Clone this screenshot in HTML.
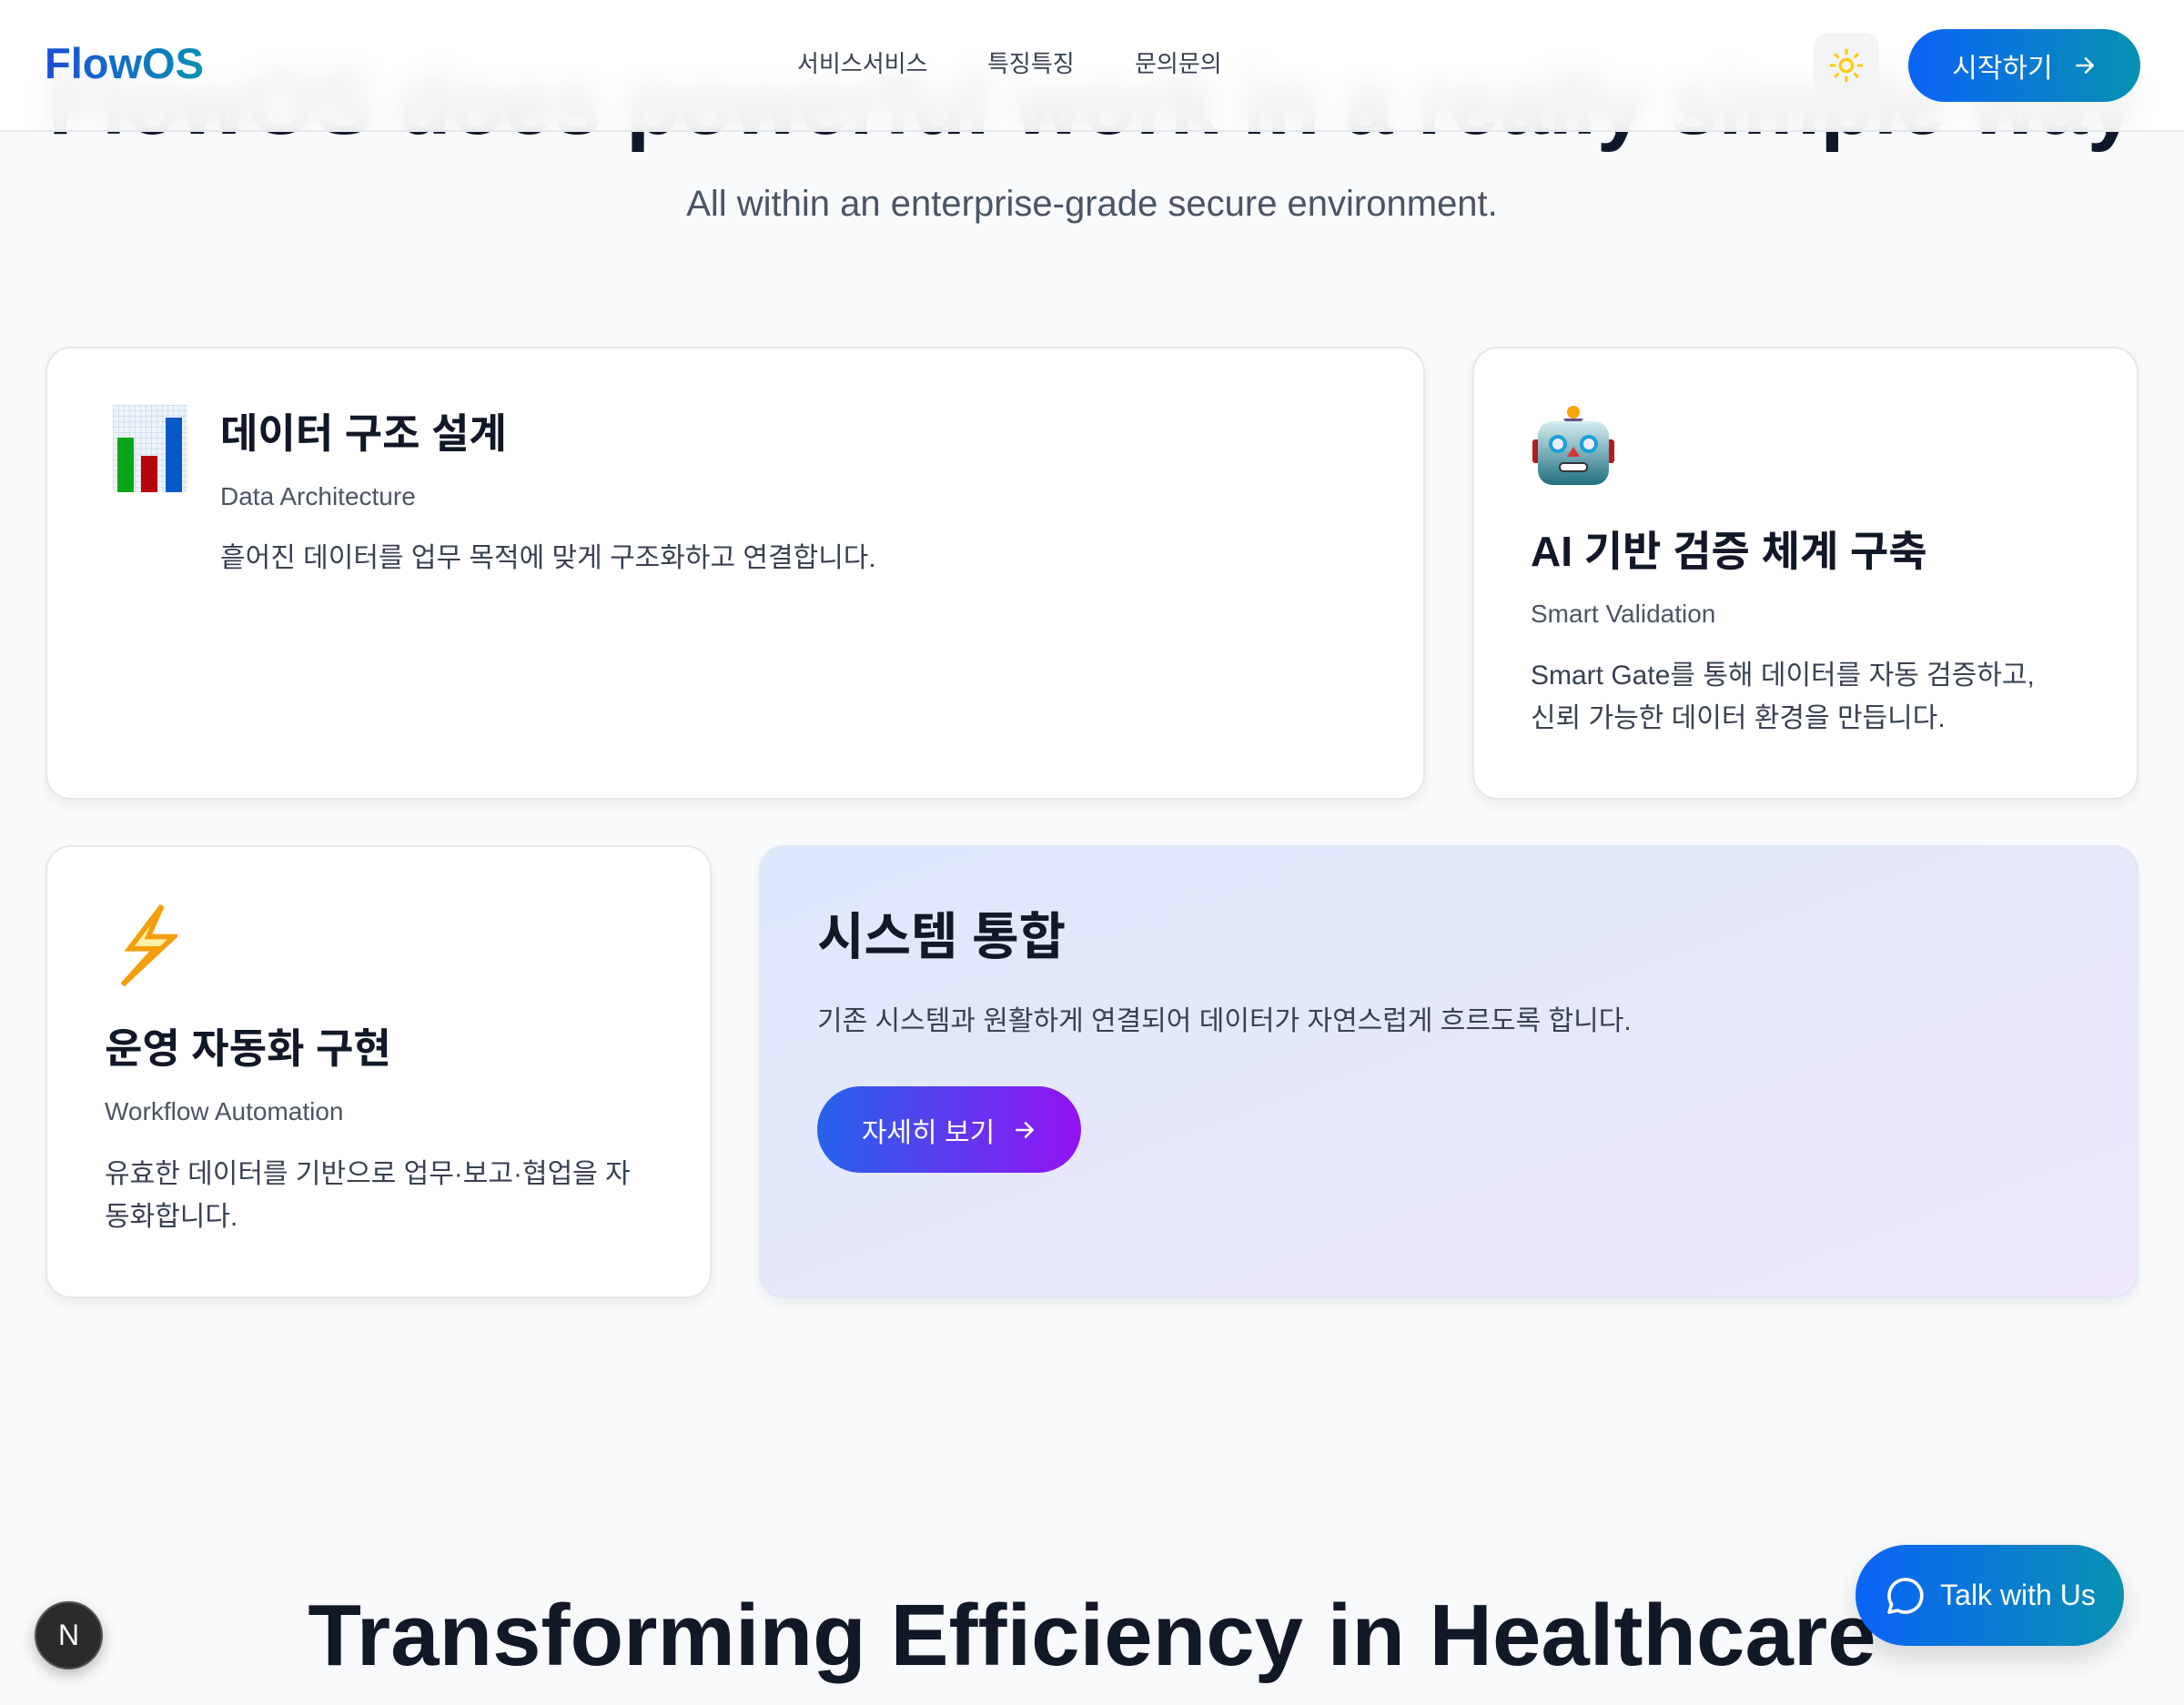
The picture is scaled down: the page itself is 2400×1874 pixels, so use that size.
<!DOCTYPE html>
<html><head><meta charset="utf-8"><style>
*{box-sizing:border-box;margin:0;padding:0}
body{width:2400px;height:1874px;background:#f8fafc;font-family:"Liberation Sans","Noto Sans CJK KR",sans-serif;color:#111827;position:relative;overflow:hidden}
.abs{position:absolute}
.hero{left:0;width:2400px;top:60px;text-align:center;font-size:96px;font-weight:700;line-height:110px;white-space:nowrap;color:#0f172a}
header{position:absolute;left:0;top:0;width:2400px;height:145px;background:rgba(255,255,255,0.9);backdrop-filter:blur(14px);-webkit-backdrop-filter:blur(14px);border-bottom:2px solid #e5e7eb;z-index:5}
.logo{left:49px;top:40px;font-size:47px;font-weight:700;background:linear-gradient(90deg,#1d4ed8,#0891b2);-webkit-background-clip:text;background-clip:text;color:transparent;line-height:60px}
.nav{top:52px;font-size:26px;color:#374151;line-height:36px}
.sun{left:1993px;top:36px;width:72px;height:72px;border-radius:16px;background:#f3f4f6;display:flex;align-items:center;justify-content:center}
.start{left:2097px;top:32px;width:255px;height:80px;border-radius:40px;background:linear-gradient(90deg,#0b63f6,#0891b2);color:#fff;font-size:30px;display:flex;align-items:center;justify-content:center;gap:22px}
.sub{left:0;width:2400px;top:202px;text-align:center;font-size:40px;color:#4b5563}
.card{position:absolute;background:#fff;border:2px solid #e5e7eb;border-radius:28px;box-shadow:0 6px 14px rgba(0,0,0,0.06)}
.t{font-size:44px;font-weight:700;color:#111827;line-height:56px;white-space:nowrap}
.s{font-size:28px;color:#4b5563;line-height:36px}
.d{font-size:30px;color:#374151;line-height:47px;word-break:break-all}
.grad{background:linear-gradient(160deg,#dde8fd 0%,#e6e8fc 50%,#f0e9fd 100%);border:2px solid #e0e7f5}
.btn{left:898px;top:1194px;width:290px;height:95px;border-radius:48px;background:linear-gradient(90deg,#2563eb,#9313f2);color:#fff;font-size:30px;display:flex;align-items:center;justify-content:center;gap:20px}
.bottom{left:0;width:2400px;top:1743px;text-align:center;font-size:96px;font-weight:700;color:#111827;line-height:110px;white-space:nowrap}
.talk{left:2039px;top:1698px;width:295px;height:111px;border-radius:56px;background:linear-gradient(90deg,#0b63f6,#0891b2);color:#fff;font-size:32px;display:flex;align-items:center;justify-content:center;gap:14px;box-shadow:0 14px 30px rgba(0,0,0,0.15)}
.n{left:38px;top:1760px;width:75px;height:75px;border-radius:50%;background:#2b2b2b;border:2px solid #555;color:#fff;font-size:32px;display:flex;align-items:center;justify-content:center;box-shadow:0 6px 16px rgba(0,0,0,0.25)}
</style></head><body>
<div class="abs hero">FlowOS does powerful work in a really simple way</div>
<header>
<div class="abs logo">FlowOS</div>
<div class="abs nav" style="left:876px">서비스서비스</div>
<div class="abs nav" style="left:1085px">특징특징</div>
<div class="abs nav" style="left:1247px">문의문의</div>
<div class="abs sun"><svg width="40" height="40" viewBox="0 0 24 24" fill="none" stroke="#facc15" stroke-width="2" stroke-linecap="round"><circle cx="12" cy="12" r="4"/><path d="M12 2v2M12 20v2M4.9 4.9l1.4 1.4M17.7 17.7l1.4 1.4M2 12h2M20 12h2M4.9 19.1l1.4-1.4M17.7 6.3l1.4-1.4"/></svg></div>
<div class="abs start"><span>시작하기</span><svg width="26" height="26" viewBox="0 0 24 24" fill="none" stroke="#fff" stroke-width="2.4" stroke-linecap="round" stroke-linejoin="round"><path d="M4 12h16M13 5l7 7-7 7"/></svg></div>
</header>
<div class="abs sub">All within an enterprise-grade secure environment.</div>

<div class="card" style="left:50px;top:381px;width:1516px;height:498px">
<svg class="abs" style="left:72px;top:62px" width="82" height="96" viewBox="0 0 82 96"><defs><pattern id="g" width="6" height="6" patternUnits="userSpaceOnUse"><path d="M6 0H0V6" fill="none" stroke="#b9cfe6" stroke-width="1"/></pattern></defs><rect x="0" y="0" width="82" height="96" fill="#eef4fb"/><rect width="82" height="96" fill="url(#g)"/><rect x="5" y="36" width="18" height="60" fill="#0aa61a"/><rect x="31" y="56" width="18" height="40" fill="#b50606"/><rect x="58" y="14" width="18" height="82" fill="#0759c8"/></svg>
<div class="abs t" style="left:190px;top:66px;font-size:45px">데이터 구조 설계</div>
<div class="abs s" style="left:190px;top:145px">Data Architecture</div>
<div class="abs d" style="left:190px;top:207px">흩어진 데이터를 업무 목적에 맞게 구조화하고 연결합니다.</div>
</div>

<div class="card" style="left:1618px;top:381px;width:732px;height:498px">
<svg class="abs" style="left:64px;top:62px" width="90" height="90" viewBox="0 0 90 90"><defs><linearGradient id="r" x1="0" y1="0" x2="0" y2="1"><stop offset="0" stop-color="#d6eef0"/><stop offset="1" stop-color="#1f6f80"/></linearGradient></defs><circle cx="45" cy="8" r="7" fill="#f7a400"/><path d="M34 15h22l-4 6H38z" fill="#6a4f8a"/><rect x="0" y="38" width="8" height="26" rx="3" fill="#b51a1a"/><rect x="82" y="38" width="8" height="26" rx="3" fill="#b51a1a"/><rect x="6" y="18" width="78" height="70" rx="16" fill="url(#r)"/><circle cx="28" cy="43" r="8" fill="#eef" stroke="#18a0d8" stroke-width="4"/><circle cx="62" cy="43" r="8" fill="#eef" stroke="#18a0d8" stroke-width="4"/><path d="M45 46l7 11H38z" fill="#d9343a"/><rect x="30" y="64" width="30" height="9" rx="4" fill="#fff" stroke="#333" stroke-width="2"/></svg>
<div class="abs t" style="left:62px;top:195px;font-size:46px">AI 기반 검증 체계 구축</div>
<div class="abs s" style="left:62px;top:274px">Smart Validation</div>
<div class="abs d" style="left:62px;top:336px;width:640px">Smart Gate를 통해 데이터를 자동 검증하고,<br>신뢰 가능한 데이터 환경을 만듭니다.</div>
</div>

<div class="card" style="left:50px;top:929px;width:732px;height:498px">
<svg class="abs" style="left:77px;top:60px" width="66" height="96" viewBox="0 0 70 96"><path d="M52 2L14 52h30L6 94 66 38H36z" fill="#fff1a8" stroke="#f59e0b" stroke-width="6" stroke-linejoin="miter"/></svg>
<div class="abs t" style="left:63px;top:194px;font-size:45px">운영 자동화 구현</div>
<div class="abs s" style="left:63px;top:273px">Workflow Automation</div>
<div class="abs d" style="left:63px;top:336px;width:600px">유효한 데이터를 기반으로 업무·보고·협업을 자동화합니다.</div>
</div>

<div class="card grad" style="left:834px;top:929px;width:1516px;height:498px">
<div class="abs t" style="left:62px;top:64px;font-size:56px;line-height:70px">시스템 통합</div>
<div class="abs d" style="left:62px;top:168px;white-space:nowrap">기존 시스템과 원활하게 연결되어 데이터가 자연스럽게 흐르도록 합니다.</div>
</div>
<div class="abs btn"><span>자세히 보기</span><svg width="26" height="26" viewBox="0 0 24 24" fill="none" stroke="#fff" stroke-width="2.4" stroke-linecap="round" stroke-linejoin="round"><path d="M4 12h16M13 5l7 7-7 7"/></svg></div>

<div class="abs bottom">Transforming Efficiency in Healthcare</div>
<div class="abs talk"><svg width="48" height="48" viewBox="0 0 24 24" fill="none" stroke="#fff" stroke-width="1.8" stroke-linejoin="round"><path d="M12 3a9 9 0 1 1-4.2 17L3 21l1.3-4.3A9 9 0 0 1 12 3z"/></svg><span>Talk with Us</span></div>
<div class="abs n">N</div>
</body></html>
